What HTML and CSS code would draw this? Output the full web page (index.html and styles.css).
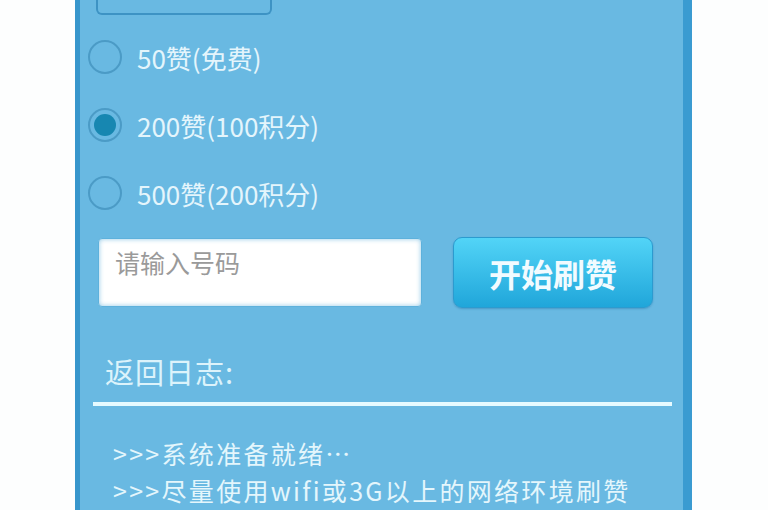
FILE: index.html
```html
<!DOCTYPE html>
<html lang="zh-CN">
<head>
  <meta charset="UTF-8" />
  <meta name="viewport" content="width=device-width, initial-scale=1.0"/>
  <title>刷赞</title>
  <link rel="stylesheet" href="styles.css">
</head>
<body>
  <div class="panel">
    <!-- button cut off at the top -->
    <div class="top-btn"></div>

    <!-- amount options -->
    <div class="options">
      <label class="option">
        <span class="radio"></span>
        <span class="option-text">50赞(免费)</span>
      </label>
      <label class="option">
        <span class="radio checked"></span>
        <span class="option-text">200赞(100积分)</span>
      </label>
      <label class="option">
        <span class="radio"></span>
        <span class="option-text">500赞(200积分)</span>
      </label>
    </div>

    <!-- number input + start -->
    <div class="action-row">
      <div class="number-input">请输入号码</div>
      <button class="start-btn">开始刷赞</button>
    </div>

    <div class="log-title">返回日志:</div>
    <div class="divider"></div>

    <div class="log">
      <div class="log-line">&gt;&gt;&gt;系统准备就绪…</div>
      <div class="log-line">&gt;&gt;&gt;尽量使用wifi或3G以上的网络环境刷赞</div>
    </div>
  </div>
</body>
</html>
```

FILE: styles.css
```css
body {
  margin: 0;
  background-color: #fdfefe;
  font-family: "Noto Sans CJK SC", "Noto Sans", sans-serif;
  height: 510px;
  overflow: hidden;
}

.panel {
  margin-left: 75px;
  width: 603px;
  height: 510px;
  background-color: #69b9e2;
  border-left: 5px solid #3896cc;
  border-right: 9px solid #3a9bd1;
}

.top-btn {
  margin-left: 16px;
  width: 172px;
  height: 13px;
  border: 2px solid #3d93c4;
  border-top: none;
  border-radius: 0 0 6px 6px;
}

.options {
  margin-top: 8px;
}

.option {
  display: flex;
  align-items: center;
  height: 68px;
  padding-left: 8px;
}

.radio {
  width: 34px;
  height: 34px;
  border: 2px solid #4b9bc6;
  border-radius: 50%;
  display: flex;
  align-items: center;
  justify-content: center;
  box-sizing: border-box;
}

.radio.checked::after {
  content: "";
  width: 22px;
  height: 22px;
  border-radius: 50%;
  background-color: #1787b1;
}

.option-text {
  margin-left: 15px;
  font-size: 26px;
  color: #e4f5fc;
}

.action-row {
  display: flex;
  align-items: center;
  margin-top: 10px;
  padding-left: 18px;
  height: 71px;
}

.number-input {
  width: 324px;
  height: 69px;
  background-color: #ffffff;
  border: 1px solid #5eb1dc;
  border-radius: 4px;
  box-shadow: inset 0 0 5px rgba(70, 165, 215, 0.6);
  color: #9a9a9a;
  font-size: 25px;
  line-height: 30px;
  padding: 8px 16px;
  box-sizing: border-box;
}

.start-btn {
  margin-left: 31px;
  width: 200px;
  height: 71px;
  border: 1px solid #2b9bcf;
  border-radius: 9px;
  background: linear-gradient(#52d4f7, #20a6da);
  box-shadow: 0 1px 2px rgba(30, 110, 160, 0.4);
  color: #f2fbff;
  font-family: inherit;
  font-size: 32px;
  font-weight: bold;
  padding: 0;
}

.log-title {
  margin-top: 43px;
  padding-left: 25px;
  font-size: 29px;
  line-height: 40px;
  letter-spacing: 1px;
  color: #dcf3fb;
}

.divider {
  margin: 11px 0 0 13px;
  width: 579px;
  height: 4px;
  background-color: #e6faff;
}

.log {
  margin-top: 29px;
  padding-left: 33px;
}

.log-line {
  font-size: 25px;
  line-height: 37px;
  letter-spacing: 2.3px;
  color: #e4f6fc;
  white-space: nowrap;
}
```
